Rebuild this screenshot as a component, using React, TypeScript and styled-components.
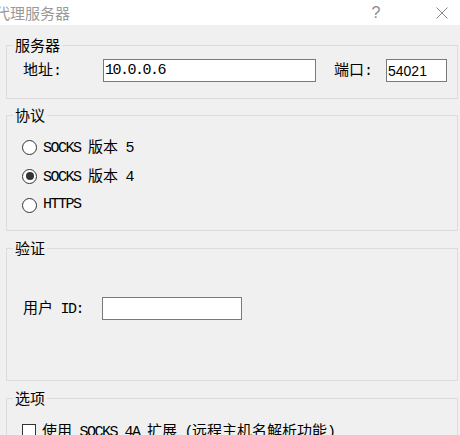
import React from "react"
import styled, { createGlobalStyle } from "styled-components"

const GlobalStyle = createGlobalStyle`
  html, body {
    margin: 0;
    padding: 0;
    background: #f0f0f0;
  }
  body {
    font-family: "Noto Sans CJK SC", "Noto Sans", sans-serif;
    font-size: 15px;
    color: #000;
  }
`

const Window = styled.div`
  width: 460px;
  height: 435px;
  overflow: hidden;
  background: #f0f0f0;
`

const TitleBar = styled.div`
  height: 25px;
  background: #fff;
  display: flex;
  align-items: center;
`

const Title = styled.div`
  flex: 1;
  margin-left: -5px;
  color: #9a9a9a;
  font-size: 15px;
  line-height: 20px;
  white-space: nowrap;
`

const TitleButtons = styled.div`
  display: flex;
  align-items: center;
  gap: 33px;
`

const TitleButton = styled.div<{ $w: number }>`
  width: ${({ $w }) => $w}px;
  height: 25px;
  display: flex;
  align-items: center;
  justify-content: center;
  color: #8a8a8a;
  font-family: "Liberation Sans", sans-serif;
  font-size: 16px;
`

const Body = styled.div`
  padding: 12px 2px 0 6px;
`

const Group = styled.fieldset<{ $gap?: number }>`
  margin: 0 0 ${({ $gap }) => $gap ?? 9}px;
  padding: 0;
  width: 452px;
  min-width: 0;
  box-sizing: border-box;
  border: 1px solid #dcdcdc;
`

const Legend = styled.legend`
  margin-left: 6px;
  padding: 0 2px;
  font-size: 15px;
  line-height: 16px;
`

const GroupBody = styled.div<{ $top: number; $bottom: number }>`
  padding: ${({ $top }) => $top}px 10px ${({ $bottom }) => $bottom}px 16px;
  display: flex;
  flex-direction: column;
  gap: 8px;
`

const Row = styled.div`
  display: flex;
  align-items: center;
  height: 23px;
  line-height: 20px;
`

const Label = styled.span<{ $w: number }>`
  width: ${({ $w }) => $w}px;
  flex: none;
  white-space: nowrap;
`

// SimSun-style half-width latin run
const M = styled.span`
  font-family: "Liberation Mono", monospace;
  font-size: 15px;
  letter-spacing: -1.5px;
`

const TextBox = styled.input<{ $w: number; $sans?: boolean }>`
  width: ${({ $w }) => $w}px;
  height: 23px;
  box-sizing: border-box;
  margin: 0;
  padding: 0 1px;
  border: 1px solid #7a7a7a;
  border-radius: 0;
  background: #fff;
  outline: none;
  color: #000;
  font-family: ${({ $sans }) => ($sans ? '"Liberation Sans", sans-serif' : '"Liberation Mono", monospace')};
  font-size: ${({ $sans }) => ($sans ? 14 : 15)}px;
  letter-spacing: ${({ $sans }) => ($sans ? 0 : -1.5)}px;
`

const Spacer = styled.span<{ $w: number }>`
  width: ${({ $w }) => $w}px;
  flex: none;
`

const Option = styled.div<{ $shift?: number }>`
  display: flex;
  align-items: center;
  height: 20px;
  line-height: 20px;
  margin-left: -1px;
  margin-top: ${({ $shift }) => $shift ?? 0}px;
  gap: 6px;
  white-space: nowrap;
`

const RadioDot = styled.span<{ $on?: boolean }>`
  width: 15px;
  height: 15px;
  box-sizing: border-box;
  border-radius: 50%;
  border: 1px solid #333;
  background: #fff;
  display: flex;
  align-items: center;
  justify-content: center;
  flex: none;
  &::after {
    content: "";
    width: 8px;
    height: 8px;
    border-radius: 50%;
    background: #333;
    display: ${({ $on }) => ($on ? "block" : "none")};
  }
`

const CheckBox = styled.span`
  width: 14px;
  height: 14px;
  box-sizing: border-box;
  border: 1px solid #333;
  background: #fff;
  flex: none;
`

const CloseIcon = () => (
  <svg width="12" height="12" viewBox="0 0 12 12">
    <path d="M0.5 0.5L11.5 11.5M11.5 0.5L0.5 11.5" stroke="#8a8a8a" strokeWidth="1" fill="none" />
  </svg>
)

const App: React.FC = () => (
  <>
    <GlobalStyle />
    <Window>
      <TitleBar>
        <Title>代理服务器</Title>
        <TitleButtons>
          <TitleButton $w={30}>?</TitleButton>
          <TitleButton $w={36}><CloseIcon /></TitleButton>
        </TitleButtons>
      </TitleBar>
      <Body>
        <Group $gap={8}>
          <Legend>服务器</Legend>
          <GroupBody $top={6} $bottom={16}>
            <Row>
              <Label $w={80}>地址<M>:</M></Label>
              <TextBox $w={213} defaultValue="10.0.0.6" readOnly />
              <Spacer $w={18} />
              <Label $w={52}>端口<M>:</M></Label>
              <TextBox $w={61} $sans defaultValue="54021" readOnly />
            </Row>
          </GroupBody>
        </Group>

        <Group>
          <Legend>协议</Legend>
          <GroupBody $top={14} $bottom={15}>
            <Option><RadioDot /><span><M>SOCKS </M>版本<M> 5</M></span></Option>
            <Option $shift={1}><RadioDot $on /><span><M>SOCKS </M>版本<M> 4</M></span></Option>
            <Option $shift={1}><RadioDot /><M>HTTPS</M></Option>
          </GroupBody>
        </Group>

        <Group>
          <Legend>验证</Legend>
          <GroupBody $top={41} $bottom={60}>
            <Row>
              <Label $w={79}>用户<M> ID:</M></Label>
              <TextBox $w={140} readOnly />
            </Row>
          </GroupBody>
        </Group>

        <Group>
          <Legend>选项</Legend>
          <GroupBody $top={15} $bottom={16}>
            <Option>
              <CheckBox />
              <span>使用<M> SOCKS 4A </M>扩展<M> (</M>远程主机名解析功能<M>)</M></span>
            </Option>
          </GroupBody>
        </Group>
      </Body>
    </Window>
  </>
)

export default App
